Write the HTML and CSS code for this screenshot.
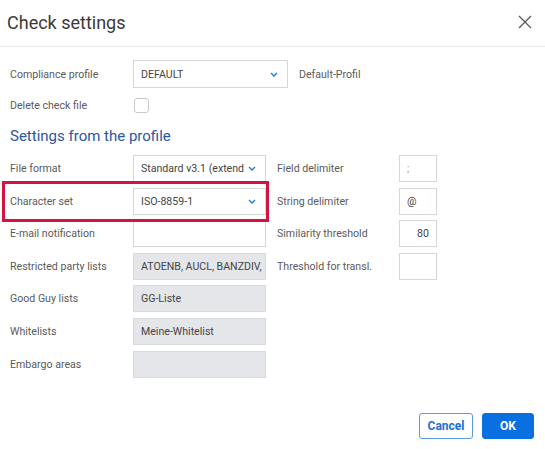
FILE: index.html
```html
<!DOCTYPE html>
<html>
<head>
<meta charset="utf-8">
<link rel="stylesheet" href="styles.css">
</head>
<body>
<div class="dialog">
  <div class="header">
    <h1 class="title">Check settings</h1>
    <svg class="close" width="14" height="14" viewBox="0 0 14 14"><path d="M1 1L13 13M13 1L1 13" stroke="#555" stroke-width="1.2" fill="none"/></svg>
  </div>
  <div class="content">
    <div class="row-top">
      <div class="label">Compliance profile</div>
      <div class="field select wide"><span class="val">DEFAULT</span><svg class="chev" width="8" height="5" viewBox="0 0 8 5"><path d="M1 1L4 4L7 1" stroke="#1a73e8" stroke-width="1.3" fill="none"/></svg></div>
      <div class="note">Default-Profil</div>
    </div>
    <div class="row-check">
      <div class="label">Delete check file</div>
      <div class="checkbox"></div>
    </div>
    <h2 class="section">Settings from the profile</h2>
    <div class="grid">
      <div class="label">File format</div>
      <div class="field select"><span class="val">Standard v3.1 (extend</span><svg class="chev" width="8" height="5" viewBox="0 0 8 5"><path d="M1 1L4 4L7 1" stroke="#1a73e8" stroke-width="1.3" fill="none"/></svg></div>
      <div class="label">Field delimiter</div>
      <div class="field small"><span class="faint">;</span></div>

      <div class="label">Character set</div>
      <div class="field select"><span class="val">ISO-8859-1</span><svg class="chev" width="8" height="5" viewBox="0 0 8 5"><path d="M1 1L4 4L7 1" stroke="#1a73e8" stroke-width="1.3" fill="none"/></svg></div>
      <div class="label">String delimiter</div>
      <div class="field small"><span>@</span></div>

      <div class="label">E-mail notification</div>
      <div class="field"></div>
      <div class="label">Similarity threshold</div>
      <div class="field small num"><span>80</span></div>

      <div class="label">Restricted party lists</div>
      <div class="field ro clip"><span class="val">ATOENB, AUCL, BANZDIV,</span></div>
      <div class="label">Threshold for transl.</div>
      <div class="field small"></div>

      <div class="label">Good Guy lists</div>
      <div class="field ro"><span class="val">GG-Liste</span></div>
      <div></div><div></div>

      <div class="label">Whitelists</div>
      <div class="field ro"><span class="val">Meine-Whitelist</span></div>
      <div></div><div></div>

      <div class="label">Embargo areas</div>
      <div class="field ro"></div>
      <div></div><div></div>
    </div>
    <div class="highlight"></div>
  </div>
  <div class="footer">
    <button class="btn cancel">Cancel</button>
    <button class="btn ok">OK</button>
  </div>
</div>
</body>
</html>
```
FILE: styles.css
```css
* { box-sizing: border-box; }
html, body { margin: 0; padding: 0; background: #fff; }
body { font-family: Roboto, "Liberation Sans", sans-serif; color: #555; width: 545px; height: 449px; overflow: hidden; }
.dialog { width: 545px; height: 449px; display: flex; flex-direction: column; }
.header { height: 47px; border-bottom: 1px solid #e9e9e9; display: flex; align-items: center; justify-content: space-between; padding: 0 13px 2px 7px; }
.title { margin: 0; font-size: 18px; font-weight: 400; color: #3a3a3a; }
.content { position: relative; padding: 13px 10px 0 10px; flex: 1; }
.label { font-size: 10.6px; color: #5a5a5a; display: flex; align-items: center; white-space: nowrap; }
.row-top { display: flex; align-items: center; height: 28px; }
.row-top .label { width: 123px; }
.field { height: 27px; border: 1px solid #d6d6d6; background: #fff; display: flex; align-items: center; padding: 0 7px; font-size: 10.6px; color: #444; white-space: nowrap; overflow: hidden; }
.val { overflow: hidden; flex: 1; min-width: 0; white-space: nowrap; }
.field.clip { padding-right: 2px; }
.field.wide { width: 155px; height: 28px; }
.select { justify-content: space-between; gap: 4px; padding-right: 9px; }
.select .chev { flex: none; }
.note { margin-left: 11px; font-size: 10.6px; color: #5a5a5a; }
.row-check { display: flex; align-items: center; height: 15px; margin-top: 10px; }
.row-check .label { width: 124px; }
.checkbox { width: 15px; height: 15px; border: 1px solid #c9c9c9; border-radius: 3px; background: #fff; }
.section { margin: 13px 0 0 0; font-size: 15px; font-weight: 400; color: #2d56a0; height: 20px; line-height: 20px; }
.grid { margin-top: 9px; display: grid; grid-template-columns: 123px 144px 122px 38px; grid-auto-rows: 27px; row-gap: 5.6px; }
.grid .field:nth-child(4n+2) { width: 133px; }
.field.small { width: 38px; }
.field.num { justify-content: flex-end; }
.faint { color: #999; }
.ro { background: #e4e6e9; border-color: #d8dadd; }
.highlight { position: absolute; left: 2px; top: 134px; width: 267px; height: 41px; border: 3px solid #d3143f; pointer-events: none; }
.footer { height: 60px; display: flex; justify-content: flex-end; align-items: flex-start; gap: 9px; padding: 24px 11px 0 0; }
.btn { height: 26px; font-family: Roboto, "Liberation Sans", sans-serif; font-size: 12px; font-weight: 700; border-radius: 3px; padding: 0; cursor: pointer; }
.cancel { width: 54px; background: #fff; color: #1a6fd6; border: 1px solid #5a9be6; }
.ok { width: 52px; background: #0a6fe0; color: #fff; border: 1px solid #0a6fe0; }
```
